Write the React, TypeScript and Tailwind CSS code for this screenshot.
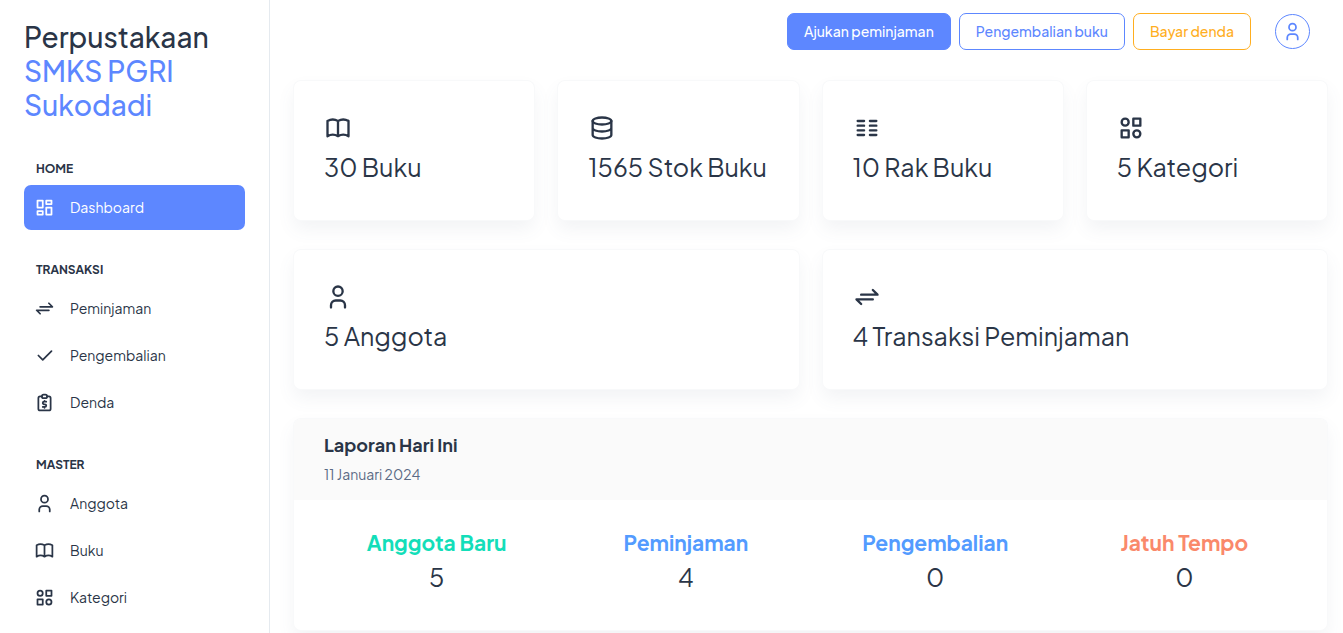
import type { ReactNode } from "react";

type IconName =
  | "dashboard"
  | "exchange"
  | "check"
  | "money"
  | "user"
  | "book"
  | "category"
  | "database"
  | "columns";

const shapes: Record<IconName, ReactNode> = {
  dashboard: <path d="M4 4h6v8h-6zM4 16h6v4h-6zM14 12h6v8h-6zM14 4h6v4h-6z" />,
  exchange: <path d="M7 10h14l-4 -4M17 14h-14l4 4" />,
  check: <path d="M5 12l5 5l10 -10" />,
  money: (
    <>
      <path d="M9 5h-2a2 2 0 0 0 -2 2v12a2 2 0 0 0 2 2h10a2 2 0 0 0 2 -2v-12a2 2 0 0 0 -2 -2h-2" />
      <rect x="9" y="3" width="6" height="4" rx="2" />
      <path d="M14 11h-2.5a1.5 1.5 0 0 0 0 3h1a1.5 1.5 0 0 1 0 3h-2.5M12 17v1m0 -8v1" />
    </>
  ),
  user: (
    <>
      <circle cx="12" cy="7" r="4" />
      <path d="M6 21v-2a4 4 0 0 1 4 -4h4a4 4 0 0 1 4 4v2" />
    </>
  ),
  book: (
    <path d="M3 19a9 9 0 0 1 9 0a9 9 0 0 1 9 0M3 6a9 9 0 0 1 9 0a9 9 0 0 1 9 0M3 6v13M12 6v13M21 6v13" />
  ),
  category: (
    <>
      <path d="M14 4h6v6h-6zM4 14h6v6h-6z" />
      <circle cx="17" cy="17" r="3" />
      <circle cx="7" cy="7" r="3" />
    </>
  ),
  database: (
    <>
      <ellipse cx="12" cy="6" rx="8" ry="3" />
      <path d="M4 6v6a8 3 0 0 0 16 0v-6M4 12v6a8 3 0 0 0 16 0v-6" />
    </>
  ),
  columns: (
    <path d="M4 6h5.5M4 10h5.5M4 14h5.5M4 18h5.5M14.5 6h5.5M14.5 10h5.5M14.5 14h5.5M14.5 18h5.5" />
  ),
};

function Icon({ name, className }: { name: IconName; className: string }) {
  return (
    <svg
      viewBox="0 0 24 24"
      fill="none"
      stroke="currentColor"
      strokeWidth="2"
      strokeLinecap="round"
      strokeLinejoin="round"
      aria-hidden="true"
      className={className}
    >
      {shapes[name]}
    </svg>
  );
}

const menu: { title: string; items: { label: string; icon: IconName; active?: boolean }[] }[] = [
  { title: "HOME", items: [{ label: "Dashboard", icon: "dashboard", active: true }] },
  {
    title: "TRANSAKSI",
    items: [
      { label: "Peminjaman", icon: "exchange" },
      { label: "Pengembalian", icon: "check" },
      { label: "Denda", icon: "money" },
    ],
  },
  {
    title: "MASTER",
    items: [
      { label: "Anggota", icon: "user" },
      { label: "Buku", icon: "book" },
      { label: "Kategori", icon: "category" },
    ],
  },
];

const stats: { label: string; icon: IconName; wide?: boolean }[] = [
  { label: "30 Buku", icon: "book" },
  { label: "1565 Stok Buku", icon: "database" },
  { label: "10 Rak Buku", icon: "columns" },
  { label: "5 Kategori", icon: "category" },
  { label: "5 Anggota", icon: "user", wide: true },
  { label: "4 Transaksi Peminjaman", icon: "exchange", wide: true },
];

const report = [
  { label: "Anggota Baru", value: 5, color: "text-[#13deb9]" },
  { label: "Peminjaman", value: 4, color: "text-[#539bff]" },
  { label: "Pengembalian", value: 0, color: "text-[#539bff]" },
  { label: "Jatuh Tempo", value: 0, color: "text-[#fa896b]" },
];

const cardStyle =
  "rounded-[7px] bg-white shadow-[0_0_0_1px_#f8f9fa,0_9px_18px_rgba(90,106,133,0.08)]";

function Sidebar() {
  return (
    <aside className="w-[270px] shrink-0 border-r border-[#e5eaef] px-6 pt-5">
      <a href="#" className="block text-[28px] leading-[34px] font-medium">
        Perpustakaan <span className="block text-[#5d87ff]">SMKS PGRI Sukodadi</span>
      </a>
      <nav className="mt-[37px] flex flex-col gap-[30px]">
        {menu.map((group) => (
          <section key={group.title}>
            <h2 className="mb-1.5 pl-3 text-xs leading-5 font-bold">{group.title}</h2>
            <ul className="flex flex-col gap-0.5">
              {group.items.map((item) => (
                <li key={item.label}>
                  <a
                    href="#"
                    className={
                      item.active
                        ? "flex h-[45px] items-center gap-[15px] rounded-[7px] bg-[#5d87ff] px-2.5 text-sm leading-[21px] text-white"
                        : "flex h-[45px] items-center gap-[15px] rounded-[7px] px-2.5 text-sm leading-[21px]"
                    }
                  >
                    <Icon name={item.icon} className="size-[21px]" />
                    {item.label}
                  </a>
                </li>
              ))}
            </ul>
          </section>
        ))}
      </nav>
    </aside>
  );
}

export default function App() {
  return (
    <div className="flex min-h-screen bg-white font-['Plus_Jakarta_Sans',Inter,sans-serif] text-[#2a3547]">
      <Sidebar />
      <div className="min-w-0 flex-1 pr-4 pl-6">
        <header className="flex items-center justify-end gap-2 pt-[13px] pr-[17px] text-sm leading-[21px] font-medium">
          <button className="h-[37px] rounded-[7px] border border-[#5d87ff] bg-[#5d87ff] px-4 text-white">
            Ajukan peminjaman
          </button>
          <button className="h-[37px] rounded-[7px] border border-[#5d87ff] px-4 text-[#5d87ff]">
            Pengembalian buku
          </button>
          <button className="h-[37px] rounded-[7px] border border-[#ffae1f] px-4 text-[#ffae1f]">
            Bayar denda
          </button>
          <button
            aria-label="Profil"
            className="ml-4 flex size-[35px] items-center justify-center rounded-full border border-[#5d87ff] text-[#5d87ff]"
          >
            <Icon name="user" className="size-[21px]" />
          </button>
        </header>
        <main className="pt-[31px]">
          <div className="grid grid-cols-4 gap-x-6 gap-y-[30px]">
            {stats.map((stat) => (
              <section
                key={stat.label}
                className={`px-[30px] pt-[33px] pb-[37px] ${cardStyle} ${stat.wide ? "col-span-2" : ""}`}
              >
                <Icon name={stat.icon} className="size-7" />
                <p className="mt-[9px] text-[25px] leading-8 whitespace-nowrap">{stat.label}</p>
              </section>
            ))}
          </div>
          <section className={`mt-[30px] overflow-hidden ${cardStyle}`}>
            <header className="bg-[#fafafa] px-[30px] pt-3.5 pb-[15px]">
              <h2 className="text-lg leading-6 font-bold">Laporan Hari Ini</h2>
              <p className="mt-[7px] text-sm leading-[21px] text-[#5a6a85]">11 Januari 2024</p>
            </header>
            <div className="grid grid-cols-4 px-[18px] pt-[29px] pb-[37px] text-center">
              {report.map((entry) => (
                <div key={entry.label}>
                  <h3 className={`text-[21px] leading-7 font-bold ${entry.color}`}>{entry.label}</h3>
                  <p className="mt-1 text-[25px] leading-8">{entry.value}</p>
                </div>
              ))}
            </div>
          </section>
        </main>
      </div>
    </div>
  );
}
